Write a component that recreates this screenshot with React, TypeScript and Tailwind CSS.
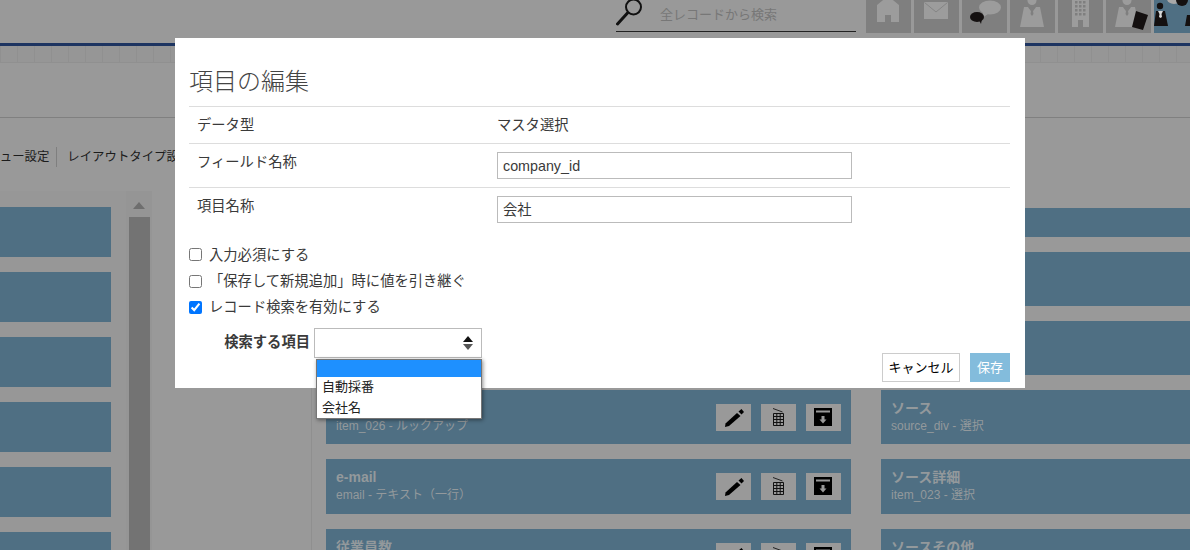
import React from "react";

const Icon = ({ children, w = 45, h = 33 }: { children: React.ReactNode; w?: number; h?: number }) => (
  <svg width={w} height={h} viewBox={`0 0 ${w} ${h}`} className="block">
    {children}
  </svg>
);

const L = "#9c9c9c";

const Person = ({ x = 0, fill = L, tie = "#7f7f7f" }: { x?: number; fill?: string; tie?: string }) => (
  <g transform={`translate(${x} 0)`}>
    <circle cx="22" cy="0.5" r="4.5" fill={fill} />
    <path d="M14 7 L18 7 L22 12 L26 7 L30 7 L34 27 L10 27 Z" fill={fill} />
    <path d="M18.5 7.5 H25.5 L23 11 L23.5 14 L22 16 L20.5 14 L21 11 Z" fill={tie} />
  </g>
);

const navIcons = [
  <Icon key="home">
    <path d="M22 -4 L33 5 V22 H25 V15 H19 V22 H11 V5 Z" fill={L} />
  </Icon>,
  <Icon key="mail">
    <path d="M10 2 H34 V19 H10 Z" fill={L} />
    <path d="M10.5 2.5 L22 12 L33.5 2.5" fill="none" stroke="#858585" strokeWidth="1" />
  </Icon>,
  <Icon key="chat">
    <ellipse cx="28" cy="7.5" rx="11" ry="7" fill={L} />
    <path d="M21 12 L20 18 L26 14 Z" fill={L} />
    <ellipse cx="15" cy="17" rx="7" ry="5" fill="#141010" />
    <path d="M17 20 L19 24 L20 19 Z" fill="#141010" />
  </Icon>,
  <Icon key="person">
    <Person />
  </Icon>,
  <Icon key="building">
    <path d="M14 0 H31 V27 H25 V20 H20 V27 H14 Z" fill={L} />
    <g fill="#7f7f7f">
      {[1, 5, 9, 13].map((y) =>
        [17, 21, 25].map((x) => <rect key={`${x}-${y}`} x={x} y={y} width="2.5" height="2.5" />),
      )}
    </g>
  </Icon>,
  <Icon key="card">
    <Person x={-1} />
    <path d="M30 11 L42 15 L37 30 L26 27 Z" fill="#141010" />
  </Icon>,
  <Icon key="active">
    <circle cx="6" cy="6" r="3.2" fill="#141010" />
    <path d="M2 11 H11 L14 26 H0 Z" fill="#141010" />
    <path d="M4 11 H9 L7.5 14 L8 17 L6.5 18 L5 17 L5.5 14 Z" fill="#d8d8d8" />
    <ellipse cx="20" cy="-1" rx="7" ry="5" fill="#a8a8a8" />
    <circle cx="28" cy="0" r="6" fill="#141010" />
    <path d="M33 15 H36 V26 H31 Z" fill="#141010" />
  </Icon>,
];

const Pencil = () => (
  <svg width="35" height="27" viewBox="0 0 35 27" className="block">
    <path d="M22.5 7.5 L25.5 5 L28 8 L25.5 10.5 Z" fill="#000" />
    <path d="M21 9 L24.5 12 L13 22 L9 23 L9.5 19.5 Z" fill="#000" />
  </svg>
);

const Trash = () => (
  <svg width="35" height="27" viewBox="0 0 35 27" className="block">
    <path d="M12 4.5 L21.5 8" stroke="#222" strokeWidth="1" fill="none" />
    <path
      d="M12.5 9.5 H22.5 V21.5 H12.5 Z M15.8 9.5 V21.5 M19.2 9.5 V21.5 M12.5 12.5 H22.5 M12.5 15.5 H22.5 M12.5 18.5 H22.5"
      stroke="#111"
      strokeWidth="1"
      fill="none"
    />
  </svg>
);

const Archive = () => (
  <svg width="35" height="27" viewBox="0 0 35 27" className="block">
    <rect x="8" y="4" width="18" height="18" fill="#000" />
    <rect x="10" y="6.5" width="14" height="2" fill="#999" />
    <path d="M15.5 12 H18.5 V15.5 H20.5 L17 19.5 L13.5 15.5 H15.5 Z" fill="#999" />
  </svg>
);

type CardData = { h: string; title?: string; sub?: string };

const midCards: CardData[] = [
  { h: "h-[29px]" },
  { h: "h-[54px]" },
  { h: "h-[54px]" },
  { h: "h-[54px]", sub: "item_026 - ルックアップ" },
  { h: "h-[55px]", title: "e-mail", sub: "email - テキスト（一行）" },
  { h: "h-[54px]", title: "従業員数" },
];

const rightCards: CardData[] = [
  { h: "h-[29px]" },
  { h: "h-[54px]" },
  { h: "h-[54px]" },
  { h: "h-[54px]", title: "ソース", sub: "source_div - 選択" },
  { h: "h-[55px]", title: "ソース詳細", sub: "item_023 - 選択" },
  { h: "h-[54px]", title: "ソースその他" },
];

const Card = ({ c, actions }: { c: CardData; actions?: boolean }) => (
  <div className={`${c.h} shrink-0 bg-[#4f6f83] flex justify-between overflow-hidden`}>
    <div className="pl-[10px] pt-[9px] text-[#93999c]">
      <div className="h-[18px] text-[14px] leading-[18px] font-bold">{c.title}</div>
      <div className="h-[18px] text-[12px] leading-[18px]">{c.sub}</div>
    </div>
    {actions && (
      <div className="flex gap-[10px] pt-[14px] pr-[10px]">
        {[<Pencil key="p" />, <Trash key="t" />, <Archive key="a" />].map((ic, i) => (
          <div key={i} className="w-[35px] h-[27px] bg-[#999]">
            {ic}
          </div>
        ))}
      </div>
    )}
  </div>
);

export default function App() {
  return (
    <div className="relative w-[1190px] h-[550px] overflow-hidden bg-[#999] font-['Liberation_Sans','Noto_Sans_CJK_JP',sans-serif] flex flex-col">
      {/* header */}
      <div className="h-[43px] shrink-0 flex pl-[616px]">
        <div className="w-[240px] h-[32px] border-b border-[#222] flex shrink-0">
          <svg width="30" height="27" viewBox="0 0 30 27" className="block shrink-0">
            <circle cx="17.5" cy="7" r="7.5" fill="none" stroke="#111" strokeWidth="2" />
            <path d="M11.5 13 L1.5 24" stroke="#111" strokeWidth="3" strokeLinecap="round" />
          </svg>
          <input
            placeholder="全レコードから検索"
            className="ml-[14px] w-[190px] h-[29px] bg-transparent text-[13px] outline-none placeholder:text-[#777]"
          />
        </div>
        <div className="ml-[10px] flex gap-[3px]">
          {navIcons.map((ic, i) => (
            <div key={i} className={`w-[45px] h-[33px] shrink-0 overflow-hidden ${i === 6 ? "bg-[#4f6f83]" : "bg-[#7f7f7f]"}`}>
              {ic}
            </div>
          ))}
        </div>
      </div>
      <div className="h-[3px] shrink-0 bg-[#1d3461]" />
      {/* strip */}
      <div className="h-[17px] shrink-0 flex overflow-hidden bg-[#969696] border-b border-[#909090]">
        {Array.from({ length: 71 }).map((_, i) => (
          <div key={i} className="w-[17.05px] shrink-0 border-l border-[#909090]" />
        ))}
      </div>
      <div className="h-[54px] shrink-0 border-b border-[#808080] box-content" />
      {/* tab row */}
      <div className="h-[73px] shrink-0 pt-[29px]">
        <div className="flex items-center h-[20px] -ml-[25px] text-[12.4px] text-[#1c1c1c] whitespace-nowrap">
          <span className="pr-[7px] border-r border-[#7f7f7f] leading-[20px]">メニュー設定</span>
          <span className="pl-[10px]">レイアウトタイプ設定</span>
        </div>
      </div>
      {/* main */}
      <div className="flex-1 min-h-0 flex overflow-hidden">
        <div className="w-[126px] shrink-0 bg-[#979797] pt-[16px] flex flex-col gap-[15px]">
          {Array.from({ length: 6 }).map((_, i) => (
            <div key={i} className="w-[111px] h-[50px] shrink-0 bg-[#4f6f83]" />
          ))}
        </div>
        <div className="w-[26px] shrink-0 bg-[#959595] flex flex-col items-center">
          <svg width="12" height="7" viewBox="0 0 12 7" className="block mt-[11px] shrink-0">
            <path d="M6 0 L12 7 H0 Z" fill="#6e6e6e" />
          </svg>
          <div className="mt-[8px] w-[21px] flex-1 bg-[#737373]" />
        </div>
        <div className="ml-[159px] w-[540px] shrink-0 border-l border-[#8f8f8f] pl-[14px] pt-[17px] flex flex-col gap-[15px]">
          {midCards.map((c, i) => (
            <Card key={i} c={c} actions />
          ))}
        </div>
        <div className="ml-[30px] w-[340px] shrink-0 pt-[17px] flex flex-col gap-[15px]">
          {rightCards.map((c, i) => (
            <Card key={i} c={c} />
          ))}
        </div>
      </div>

      {/* modal */}
      <div className="absolute left-[175px] top-[38px] w-[850px] h-[350px] bg-white pl-[14px] pr-[15px] flex flex-col text-[14.3px] text-[#3a3a3a]">
        <h2 className="pt-[26px] pb-[6px] text-[24px] leading-[36px] font-light text-[#444]">項目の編集</h2>
        <div className="h-[37px] shrink-0 border-t border-[#ddd] flex items-center pl-[8px] pt-[2px]">
          <div className="w-[300px]">データ型</div>
          <div>マスタ選択</div>
        </div>
        <div className="h-[44px] shrink-0 border-t border-[#ddd] flex pl-[8px] pt-[8px]">
          <div className="w-[300px] leading-[18px] pt-[1px]">フィールド名称</div>
          <input
            defaultValue="company_id"
            className="w-[355px] h-[27px] border border-[#bbb] px-[5px] text-[14.3px] text-[#3a3a3a] outline-none"
          />
        </div>
        <div className="h-[44px] shrink-0 border-t border-[#ddd] flex pl-[8px] pt-[8px]">
          <div className="w-[300px] leading-[18px] pt-[1px]">項目名称</div>
          <input
            defaultValue="会社"
            className="w-[355px] h-[27px] border border-[#bbb] px-[5px] pb-[3px] text-[14.3px] text-[#3a3a3a] outline-none"
          />
        </div>
        <div className="flex-1 min-h-0 flex justify-between pt-[10px]">
          <div className="flex flex-col">
            <label className="h-[27px] flex items-center gap-[7px]">
              <input type="checkbox" className="w-[13px] h-[13px]" />
              <span className="mt-[2px]">入力必須にする</span>
            </label>
            <label className="h-[26px] flex items-center gap-[7px]">
              <input type="checkbox" className="w-[13px] h-[13px]" />
              <span className="mt-[2px]">「保存して新規追加」時に値を引き継ぐ</span>
            </label>
            <label className="h-[26px] flex items-center gap-[7px]">
              <input type="checkbox" defaultChecked className="w-[13px] h-[13px]" />
              <span className="mt-[2px]">レコード検索を有効にする</span>
            </label>
            <div className="mt-[8px] flex">
              <div className="w-[121px] h-[30px] text-right font-bold leading-[28px]">検索する項目</div>
              <div className="relative ml-[4px] w-[168px] h-[30px] border border-[#bbb] bg-white flex items-center justify-end pr-[8px]">
                <svg width="10" height="14" viewBox="0 0 10 14" className="block">
                  <path d="M5 0 L10 6 H0 Z" fill="#111" />
                  <path d="M5 14 L10 8 H0 Z" fill="#555" />
                </svg>
                <div className="absolute left-[1px] top-[30px] w-[166px] h-[60px] bg-white border border-[#767676] shadow-[1px_1px_4px_rgba(0,0,0,0.45)] text-[13px] text-[#222]">
                  <div className="h-[17px] bg-[#1e90ff]" />
                  <div className="h-[20px] leading-[20px] pl-[5px]">自動採番</div>
                  <div className="h-[21px] leading-[21px] pl-[5px]">会社名</div>
                </div>
              </div>
            </div>
          </div>
          <div className="self-end flex gap-[10px] pb-[6px]">
            <button className="w-[78px] h-[29px] border border-[#ccc] bg-white text-[13px] text-black">キャンセル</button>
            <button className="w-[40px] h-[29px] bg-[#83bcdc] text-[13px] text-white">保存</button>
          </div>
        </div>
      </div>
    </div>
  );
}
